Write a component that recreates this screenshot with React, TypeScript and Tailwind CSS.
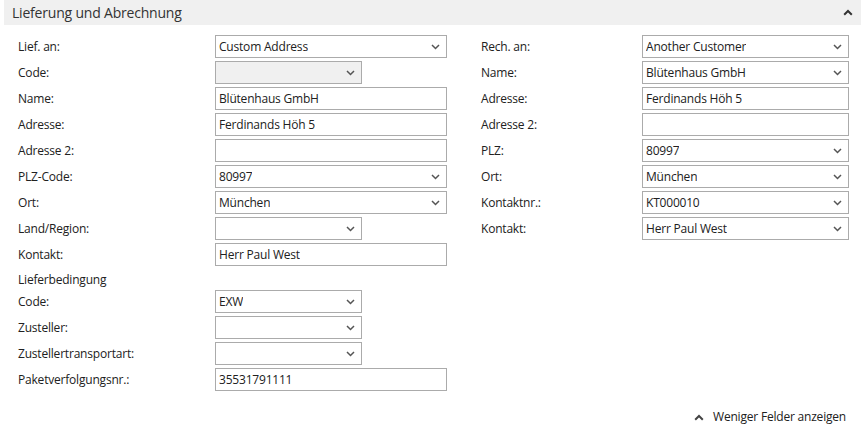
type Field = {
  label: string
  value?: string
  kind: 'text' | 'select'
  width: 'wide' | 'narrow'
  disabled?: boolean
}

const leftTop: Field[] = [
  { label: 'Lief. an:', value: 'Custom Address', kind: 'select', width: 'wide' },
  { label: 'Code:', kind: 'select', width: 'narrow', disabled: true },
  { label: 'Name:', value: 'Blütenhaus GmbH', kind: 'text', width: 'wide' },
  { label: 'Adresse:', value: 'Ferdinands Höh 5', kind: 'text', width: 'wide' },
  { label: 'Adresse 2:', kind: 'text', width: 'wide' },
  { label: 'PLZ-Code:', value: '80997', kind: 'select', width: 'wide' },
  { label: 'Ort:', value: 'München', kind: 'select', width: 'wide' },
  { label: 'Land/Region:', kind: 'select', width: 'narrow' },
  { label: 'Kontakt:', value: 'Herr Paul West', kind: 'text', width: 'wide' },
]

const leftBottom: Field[] = [
  { label: 'Code:', value: 'EXW', kind: 'select', width: 'narrow' },
  { label: 'Zusteller:', kind: 'select', width: 'narrow' },
  { label: 'Zustellertransportart:', kind: 'select', width: 'narrow' },
  { label: 'Paketverfolgungsnr.:', value: '35531791111', kind: 'text', width: 'wide' },
]

const right: Field[] = [
  { label: 'Rech. an:', value: 'Another Customer', kind: 'select', width: 'wide' },
  { label: 'Name:', value: 'Blütenhaus GmbH', kind: 'select', width: 'wide' },
  { label: 'Adresse:', value: 'Ferdinands Höh 5', kind: 'text', width: 'wide' },
  { label: 'Adresse 2:', kind: 'text', width: 'wide' },
  { label: 'PLZ:', value: '80997', kind: 'select', width: 'wide' },
  { label: 'Ort:', value: 'München', kind: 'select', width: 'wide' },
  { label: 'Kontaktnr.:', value: 'KT000010', kind: 'select', width: 'wide' },
  { label: 'Kontakt:', value: 'Herr Paul West', kind: 'select', width: 'wide' },
]

function ChevronDown() {
  return (
    <svg width="9" height="6" viewBox="0 0 9 6" className="shrink-0">
      <path d="M1 1 L4.5 4.5 L8 1" fill="none" stroke="#555" strokeWidth="1.5" />
    </svg>
  )
}

function ChevronUp({ color = '#333' }: { color?: string }) {
  return (
    <svg width="10" height="7" viewBox="0 0 10 7" className="shrink-0">
      <path d="M1.2 5.8 L5 2 L8.8 5.8" fill="none" stroke={color} strokeWidth="2" />
    </svg>
  )
}

function Row({ field, labelWidth, wide }: { field: Field; labelWidth: string; wide: string }) {
  const w = field.width === 'wide' ? wide : 'w-[147px]'
  return (
    <div className="flex items-center h-[23px] mb-[3px]">
      <div className={`${labelWidth} shrink-0 text-[12px] text-[#212121]`}>{field.label}</div>
      <div
        className={`${w} h-[23px] flex items-center justify-between border border-[#ababab] pl-[3px] pr-[6px] text-[12px] text-[#212121] ${
          field.disabled ? 'bg-[#f0f0f0]' : 'bg-white'
        }`}
      >
        <span className="truncate">{field.value ?? ''}</span>
        {field.kind === 'select' && <ChevronDown />}
      </div>
    </div>
  )
}

export default function App() {
  return (
    <div className="w-[861px] h-[437px] bg-white font-['Open_Sans',sans-serif] tracking-[-0.2px]">
      <div className="ml-[4px] h-[25px] bg-[#f0f0f0] flex items-center justify-between pl-[8px] pr-[8px]">
        <span className="text-[14px] text-[#333]">Lieferung und Abrechnung</span>
        <ChevronUp />
      </div>
      <div className="flex pl-[18px] pt-[10px]">
        <div className="w-[429px]">
          {leftTop.map((f, i) => (
            <Row key={i} field={f} labelWidth="w-[197px]" wide="w-[232px]" />
          ))}
          <div className="h-[21px] flex items-center text-[12px] text-[#212121]">Lieferbedingung</div>
          {leftBottom.map((f, i) => (
            <Row key={i} field={f} labelWidth="w-[197px]" wide="w-[232px]" />
          ))}
        </div>
        <div className="ml-[34px] w-[368px]">
          {right.map((f, i) => (
            <Row key={i} field={f} labelWidth="w-[161px]" wide="w-[207px]" />
          ))}
        </div>
      </div>
      <div className="flex justify-end items-center pr-[15px] pt-[14px] gap-[9px]">
        <ChevronUp color="#444" />
        <span className="text-[12px] text-[#212121]">Weniger Felder anzeigen</span>
      </div>
    </div>
  )
}
